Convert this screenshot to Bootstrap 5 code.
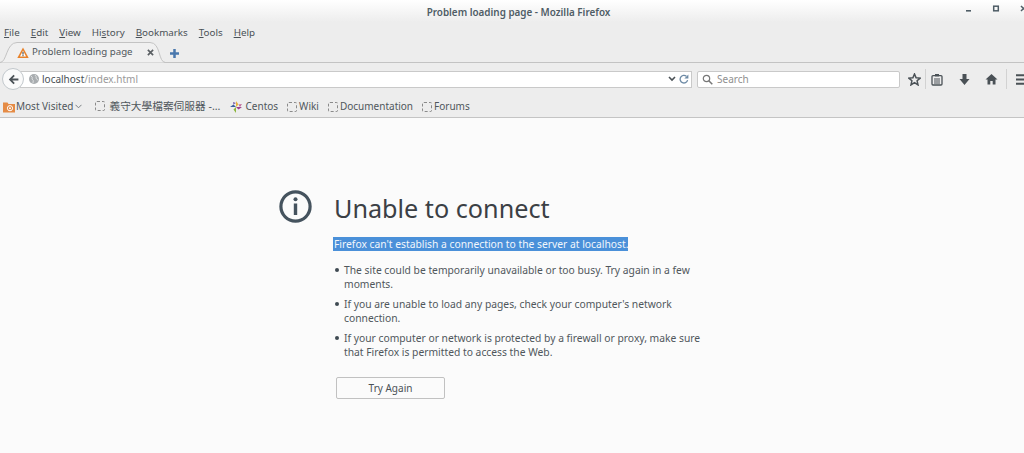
<!DOCTYPE html>
<html lang="en">
<head>
<meta charset="UTF-8" />
<title>Problem loading page - Mozilla Firefox</title>
<link rel="stylesheet" href="https://cdn.jsdelivr.net/npm/bootstrap@5.3.0/dist/css/bootstrap.min.css" />
<style>
  html, body { height: 100%; }
  body { font-family: "Noto Sans", "Noto Sans CJK TC", sans-serif; font-size: 11px; color: #50575c; background: #fbfbfb; overflow: hidden; }
  .chrome-top { background: linear-gradient(#ffffff 0, #ededed 22px, #ededed 100%); height: 118px; border-bottom: 1px solid #c4c4c4; }
  .title-bar { height: 24px; padding-top: 1px; }
  .title-text { font-weight: 600; font-size: 9.9px; color: #4f5d66; margin-left: 13px; }
  .win-btns { right: 0; top: 0; height: 18px; }
  .menu-row { height: 19px; padding-left: 4px; gap: 11px; font-size: 9.8px; color: #4a5156; }
  .menu-row u { text-underline-offset: 1px; }
  .tab-strip { height: 20px; border-bottom: 1px solid #c3c3c3; }
  .fx-tab { width: 166px; height: 21px; padding-left: 17px; margin-bottom: -1px; font-size: 9.7px; }
  .tab-shape { left: 0; top: 0; }
  .tab-label { margin-left: 3px; width: 103px; white-space: nowrap; }
  .tab-close { margin-left: 12px; }
  .tab-plus { margin-left: 4px; margin-bottom: 4px; }
  .nav-row { height: 32px; padding-left: 2px; }
  .back-btn { width: 22px; height: 22px; border: 1px solid #c2c8cc; border-radius: 50%; background: #fafafa; z-index: 1; }
  .url-box { width: 672px; height: 17px; margin-left: -4px; background: #fff; border: 1px solid #c9c9c9; padding-left: 8px; font-size: 10px; }
  .url-globe { margin-right: 3px; }
  .url-host { color: #4a5156; }
  .url-path { color: #9a9a9a; }
  .reload-box { width: 15px; height: 15px; }
  .search-box { width: 203px; height: 17px; margin-left: 5px; background: #fff; border: 1px solid #c9c9c9; border-radius: 2px; padding-left: 4px; color: #8f8f8f; font-size: 10px; }
  .tool-icons { margin-left: 8px; }
  .tool-icons > * { flex-shrink: 0; }
  .tool-sep { width: 1px; height: 20px; background: #d2d2d2; }
  .gap-after-star { margin-left: 4px; }
  .gap-clip { margin-left: 5px; }
  .gap-wide { margin-left: 16px; }
  .gap-home { margin-left: 15px; }
  .gap-sep { margin-left: 8px; }
  .gap-burger { margin-left: 9px; }
  .bm-row { height: 23px; padding-left: 3px; font-size: 10px; }
  .bm-item { margin-right: 9px; white-space: nowrap; }
  .bm-first { margin-right: 13px; }
  .bm-most { margin-left: 1px; }
  .bm-caret { margin-left: 2px; }
  .bm-blank { width: 10px; height: 10px; border: 1px dashed #8a8a8a; border-radius: 2px; margin-right: 2px; }
  .bm-cjk { font-size: 10.7px; margin-left: 2px; }
  .err-wrap { width: 368px; margin-left: 334px; padding-top: 72px; color: #50575c; }
  .err-icon { left: -55px; top: 72px; }
  .err-title { font-size: 25.2px; font-weight: 400; line-height: 36px; color: #3b4045; margin: 0 0 12px; }
  .err-lead { font-size: 10.3px; line-height: 13px; margin-bottom: 12px; }
  .err-lead span { background: #4a90d9; color: #f2f7fc; padding-left: 1px; margin-left: -1px; }
  .err-list { list-style: none; padding-left: 10px; margin-bottom: 18px; font-size: 10.3px; line-height: 14.4px; }
  .err-list li { margin-bottom: 5px; position: relative; }
  .err-list li::before { content: ""; position: absolute; left: -9px; top: 5px; width: 4px; height: 4px; border-radius: 50%; background: #3f4a52; }
  .retry-btn { width: 109px; height: 22px; margin-left: 2px; padding: 1px 0 0; background: #fbfbfb; border: 1px solid #c1c1c1; border-radius: 2px; font-size: 10px; color: #4a5156; }
</style>
</head>
<body>
  <div class="chrome-top">
    <div class="title-bar position-relative d-flex justify-content-center align-items-center">
      <span class="title-text">Problem loading page - Mozilla Firefox</span>
      <div class="win-btns position-absolute d-flex align-items-center">
        <svg width="70" height="18" viewBox="0 0 70 18">
          <rect x="12" y="10" width="5" height="1.6" fill="#4f5d66"/>
          <rect x="39.7" y="6.2" width="4.6" height="4.6" fill="none" stroke="#4f5d66" stroke-width="1.5"/>
          <path d="M 67 6 l 5 5 M 72 6 l -5 5" stroke="#4f5d66" stroke-width="1.5"/>
        </svg>
      </div>
    </div>
    <div class="menu-row d-flex align-items-center">
      <span><u>F</u>ile</span><span><u>E</u>dit</span><span><u>V</u>iew</span><span>Hi<u>s</u>tory</span><span><u>B</u>ookmarks</span><span><u>T</u>ools</span><span><u>H</u>elp</span>
    </div>
    <div class="tab-strip d-flex align-items-end">
      <div class="fx-tab position-relative d-flex align-items-center flex-shrink-0">
        <svg class="tab-shape position-absolute" width="166" height="21" viewBox="0 0 166 21"><path d="M0 20.5 C7 20.5 6 .5 17 .5 H150 C161 .5 158 20.5 165.5 20.5" fill="#f0f0f0" stroke="#c3c3c3"/></svg>
        <svg width="12" height="12" viewBox="0 0 12 12" class="position-relative flex-shrink-0"><path d="M6 .5 L11.7 11 H.3 Z" fill="#e8822a"/><path d="M6 3.6 L9 9.6 H3 Z" fill="#fff"/><rect x="5.4" y="4.8" width="1.2" height="2.8" fill="#555"/><rect x="5.4" y="8.1" width="1.2" height="1.1" fill="#555"/></svg>
        <span class="tab-label position-relative">Problem loading page</span>
        <svg width="7" height="7" viewBox="0 0 8 8" class="tab-close position-relative flex-shrink-0"><path d="M1 1 L7 7 M7 1 L1 7" stroke="#5a5f63" stroke-width="1.9"/></svg>
      </div>
      <svg width="9" height="9" viewBox="0 0 10 10" class="tab-plus"><path d="M3.6 0 H6.4 V3.6 H10 V6.4 H6.4 V10 H3.6 V6.4 H0 V3.6 H3.6 Z" fill="#4a78ad"/></svg>
    </div>
    <div class="nav-row d-flex align-items-center">
      <div class="back-btn d-flex align-items-center justify-content-center flex-shrink-0">
        <svg width="11" height="11" viewBox="0 0 11 11"><path d="M5.5 .8 L.8 5.5 L5.5 10.2 L6.8 8.9 L4.3 6.5 H10.4 V4.5 H4.3 L6.8 2.1 Z" fill="#4a5156"/></svg>
      </div>
      <div class="url-box d-flex align-items-center flex-shrink-0">
        <svg width="10" height="10" viewBox="0 0 10 10" class="url-globe flex-shrink-0"><circle cx="5" cy="5" r="5" fill="#a9adb0"/><path d="M2 2 Q4 3 3 5 Q5 6 4 9 M6 1 Q8 3 7 4 Q8 6 9 6" stroke="#dfe1e2" fill="none"/></svg>
        <span class="url-host">localhost</span><span class="url-path">/index.html</span>
        <svg width="8" height="6" viewBox="0 0 8 6" class="ms-auto"><path d="M1 1 L4 4 L7 1" stroke="#4a5156" stroke-width="1.6" fill="none"/></svg>
        <div class="reload-box d-flex align-items-center justify-content-center">
          <svg width="10" height="10" viewBox="0 0 10 10"><path d="M8.6 6.2 A3.8 3.8 0 1 1 7.4 2.3" stroke="#6d8aa5" fill="none" stroke-width="1.3"/><path d="M9.4 .6 V4.6 H5.4 Z" fill="#6d8aa5"/></svg>
        </div>
      </div>
      <div class="search-box d-flex align-items-center flex-shrink-0">
        <svg width="11" height="11" viewBox="0 0 11 11" class="flex-shrink-0"><circle cx="4.5" cy="4.5" r="3.2" fill="none" stroke="#777" stroke-width="1.2"/><path d="M7 7 L10.3 10.3" stroke="#777" stroke-width="1.5"/></svg>
        <span class="ms-1">Search</span>
      </div>
      <div class="tool-icons d-flex align-items-center">
        <svg width="13" height="13" viewBox="0 0 13 13"><path d="M6.5 1 L8.1 4.8 L12.2 5.1 L9.1 7.8 L10 11.9 L6.5 9.7 L3 11.9 L3.9 7.8 L.8 5.1 L4.9 4.8 Z" fill="none" stroke="#4a5156" stroke-width="1.5"/></svg>
        <div class="tool-sep gap-after-star"></div>
        <svg class="gap-clip" width="12" height="13" viewBox="0 0 12 13"><rect x="1" y="2.6" width="10" height="9.4" rx="1" fill="none" stroke="#4a5156" stroke-width="1.3"/><rect x="4" y="1" width="4" height="2.4" fill="#4a5156"/><path d="M3 6 H9 M3 8 H9 M3 10 H9" stroke="#4a5156"/></svg>
        <svg class="gap-wide" width="11" height="13" viewBox="0 0 11 13"><path d="M3.5 1 H7.5 V6 H10.5 L5.5 12 L.5 6 H3.5 Z" fill="#4a5156"/></svg>
        <svg class="gap-home" width="13" height="12" viewBox="0 0 13 12"><path d="M6.5 1 L12.5 6.5 H10.5 V11.5 H7.7 V8 H5.3 V11.5 H2.5 V6.5 H.5 Z" fill="#4a5156"/></svg>
        <div class="tool-sep gap-sep"></div>
        <svg class="gap-burger" width="12" height="11" viewBox="0 0 12 11"><path d="M0 1.2 H12 M0 5.5 H12 M0 9.8 H12" stroke="#4a5156" stroke-width="2"/></svg>
      </div>
    </div>
    <div class="bm-row d-flex align-items-center">
      <div class="bm-item bm-first d-flex align-items-center">
        <svg width="12" height="12" viewBox="0 0 12 12" class="flex-shrink-0"><path d="M0 1.5 H4.5 L5.5 3 H12 V11.5 H0 Z" fill="#e58b45"/><circle cx="7" cy="7.2" r="2.6" fill="none" stroke="#fff"/><circle cx="7" cy="7.2" r="1" fill="#fff"/></svg>
        <span class="bm-most">Most Visited</span>
        <svg width="7" height="5" viewBox="0 0 7 5" class="bm-caret"><path d="M.5 .8 L3.5 3.8 L6.5 .8" stroke="#7a7f83" fill="none"/></svg>
      </div>
      <div class="bm-item d-flex align-items-center"><span class="bm-blank"></span><span class="bm-cjk">義守大學檔案伺服器 -...</span></div>
      <div class="bm-item d-flex align-items-center">
        <svg width="12" height="12" viewBox="0 0 12 12" class="me-1"><path d="M6 0 L8.5 3.5 L6 6 Z" fill="#e8b13a"/><path d="M12 6 L8.5 8.5 L6 6 Z" fill="#9c3f8e"/><path d="M6 12 L3.5 8.5 L6 6 Z" fill="#8bb53c"/><path d="M0 6 L3.5 3.5 L6 6 Z" fill="#3c5fa0"/><path d="M8.5 3.5 L12 3 L10 6 Z" fill="#c06a9a"/><path d="M3.5 3.5 L3 1 L6 2 Z" fill="#7a5aa8"/></svg>
        <span>Centos</span>
      </div>
      <div class="bm-item d-flex align-items-center"><span class="bm-blank"></span><span>Wiki</span></div>
      <div class="bm-item d-flex align-items-center"><span class="bm-blank"></span><span>Documentation</span></div>
      <div class="bm-item d-flex align-items-center"><span class="bm-blank"></span><span>Forums</span></div>
    </div>
  </div>
  <div class="err-wrap position-relative">
    <svg class="err-icon position-absolute" width="33" height="33" viewBox="0 0 33 33"><circle cx="16.5" cy="16.5" r="14.6" fill="none" stroke="#45535e" stroke-width="3.2"/><rect x="14.8" y="13.5" width="3.4" height="11.5" fill="#45535e"/><circle cx="16.5" cy="9.2" r="2" fill="#45535e"/></svg>
    <h1 class="err-title">Unable to connect</h1>
    <p class="err-lead"><span>Firefox can't establish a connection to the server at localhost.</span></p>
    <ul class="err-list">
      <li>The site could be temporarily unavailable or too busy. Try again in a few moments.</li>
      <li>If you are unable to load any pages, check your computer's network connection.</li>
      <li>If your computer or network is protected by a firewall or proxy, make sure that Firefox is permitted to access the Web.</li>
    </ul>
    <button class="btn retry-btn" type="button">Try Again</button>
  </div>
  <script src="https://cdn.jsdelivr.net/npm/bootstrap@5.3.0/dist/js/bootstrap.bundle.min.js"></script>
</body>
</html>
